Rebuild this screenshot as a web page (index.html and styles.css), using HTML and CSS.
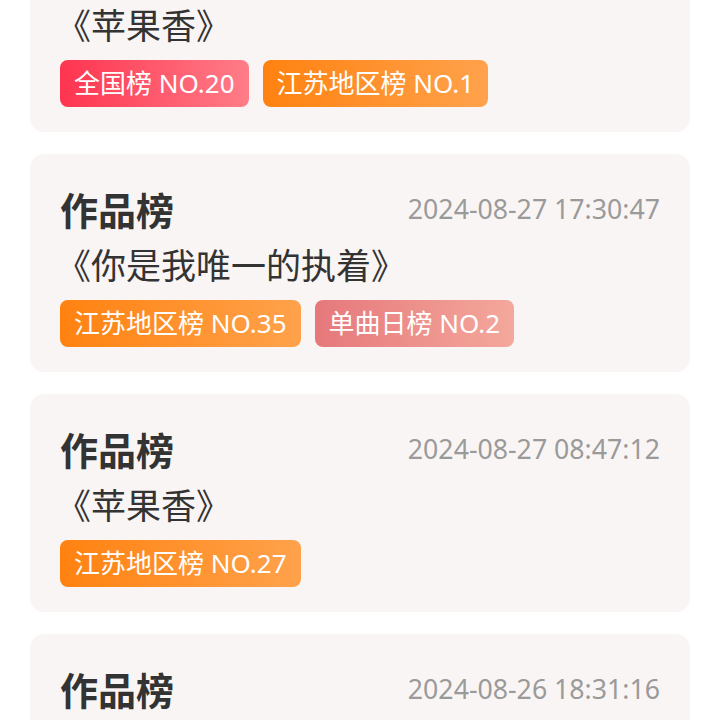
FILE: index.html
```html
<!DOCTYPE html>
<html lang="zh-CN">
<head>
    <meta charset="UTF-8">
    <meta name="viewport" content="width=device-width, initial-scale=1.0">
    <title>作品榜记录</title>
    <link rel="stylesheet" href="styles.css">
</head>
<body>
    <div class="list">
        <div class="card">
            <div class="head">
                <span class="title">作品榜</span>
                <span class="date">2024-08-28 09:12:05</span>
            </div>
            <div class="song">《苹果香》</div>
            <div class="tags">
                <span class="tag red">全国榜 NO.20</span>
                <span class="tag orange">江苏地区榜 NO.1</span>
            </div>
        </div>

        <div class="card">
            <div class="head">
                <span class="title">作品榜</span>
                <span class="date">2024-08-27 17:30:47</span>
            </div>
            <div class="song">《你是我唯一的执着》</div>
            <div class="tags">
                <span class="tag orange">江苏地区榜 NO.35</span>
                <span class="tag pink">单曲日榜 NO.2</span>
            </div>
        </div>

        <div class="card">
            <div class="head">
                <span class="title">作品榜</span>
                <span class="date">2024-08-27 08:47:12</span>
            </div>
            <div class="song">《苹果香》</div>
            <div class="tags">
                <span class="tag orange">江苏地区榜 NO.27</span>
            </div>
        </div>

        <div class="card">
            <div class="head">
                <span class="title">作品榜</span>
                <span class="date">2024-08-26 18:31:16</span>
            </div>
            <div class="song">《苹果香》</div>
            <div class="tags">
                <span class="tag orange">江苏地区榜 NO.30</span>
            </div>
        </div>
    </div>
</body>
</html>
```

FILE: styles.css
```css
body { margin: 0; background: #fff; font-family: "Noto Sans", "Noto Sans CJK SC", sans-serif; overflow: hidden; }
.list { display: flex; flex-direction: column; gap: 22px; padding: 0 30px; margin-top: -86px; }
.card { background: #f9f5f4; border-radius: 14px; padding: 30px 30px 25px; }
.head { display: flex; justify-content: space-between; align-items: center; height: 48px; }
.title { font-size: 38px; font-weight: bold; color: #333; font-family: "Noto Sans CJK SC", sans-serif; }
.date { font-size: 26.7px; color: #9a9a9a; }
.song { margin-top: 10px; line-height: 44px; font-size: 35px; color: #333; margin-left: -4px; font-family: "Noto Sans CJK SC", sans-serif; }
.tags { display: flex; gap: 14px; margin-top: 14px; }
.tag { height: 47px; line-height: 47px; padding: 0 14px; border-radius: 8px; font-size: 26px; color: #fff; }
.red { background: linear-gradient(90deg, #fe3450, #ff7d88); }
.orange { background: linear-gradient(90deg, #ff8210, #ffa24c); }
.pink { background: linear-gradient(90deg, #e6787b, #f4a89c); }
```
